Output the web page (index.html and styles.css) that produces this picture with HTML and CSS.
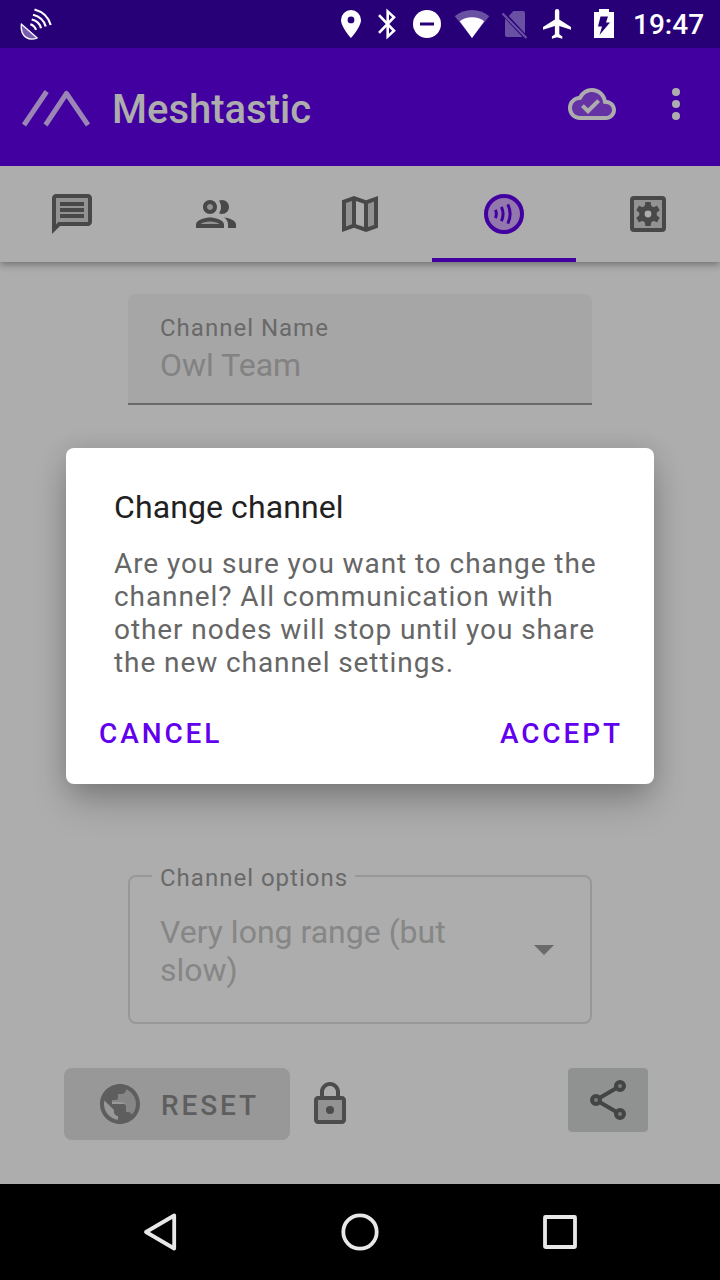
FILE: index.html
```html
<!DOCTYPE html>
<html lang="en">
<head>
<meta charset="utf-8">
<title>Meshtastic</title>
<link rel="stylesheet" href="styles.css">
</head>
<body>
<div class="screen">
  <header class="status">
    <svg class="dish" width="36" height="36" viewBox="18 6 36 36" fill="none" stroke="#fff" stroke-width="2.2">
      <path d="M21.300 24L37.200 38C30 41 20 38 21.300 24Z" fill="#7a5cae" stroke-width="1.300" stroke-linejoin="round"/>
      <path d="M34.500 9.500C42 11.500 48.500 17 50.700 25M33 14.800C39 16.300 44 20.500 45.700 26.500M31.700 19.500C36 20.500 39.800 23.500 41 28.200M30.300 24.300C33 25 35 27 36 29.800"/>
    </svg>
    <div class="status-icons">
      <svg width="20" height="32" viewBox="341 8 20 32" fill="#fff"><path fill-rule="evenodd" d="M351 10a10 10 0 0 0-10 10c0 7.200 10 18 10 18s10-10.800 10-18a10 10 0 0 0-10-10zm0 13.300a3.400 3.400 0 1 1 0-6.800 3.400 3.400 0 0 1 0 6.800z"/></svg>
      <svg class="bt" width="20" height="32" viewBox="377 8 20 32" fill="none" stroke="#fff" stroke-width="2.600"><path d="M379 15.200L394 30.800 387.700 36.600V11.400L394 17.200 379 32.800"/></svg>
      <svg class="dnd" width="28" height="32" viewBox="413 8 28 32"><circle cx="427" cy="24" r="14" fill="#fff"/><path d="M420 24h14" stroke="#270077" stroke-width="3"/></svg>
      <svg class="wifi" width="34" height="32" viewBox="455 8 34 32"><path d="M454.800 16.200C459.500 12 465.500 9.900 472 9.900s12.500 2.100 17.200 6.300L472 38z" fill="#6a50a2"/><path d="M459.800 21.300C463 18.800 467 17.300 472 17.300s9 1.500 12.200 4L472 38z" fill="#fff"/></svg>
      <svg class="sim" width="28" height="32" viewBox="501 8 28 32"><path d="M513.500 11H523a2 2 0 0 1 2 2v20.400L508.800 16zM505 18.500L522.500 37H507a2 2 0 0 1-2-2z" fill="#6a50a2"/><path d="M502.500 13.500L526.500 38" stroke="#6a50a2" stroke-width="2.300"/></svg>
      <svg class="plane" width="28" height="32" viewBox="543 8 28 32" fill="#fff"><path d="M571 29.800v-2.900l-11.700-7.400v-8.200a2.200 2.200 0 0 0-4.400 0v8.200L543 26.900v2.900l11.900-3.700v8.100l-3 2.200v2.300l5.200-1.500 5.200 1.500v-2.300l-3-2.200v-8.100z"/></svg>
      <svg class="battery" width="20" height="32" viewBox="594 8 20 32"><path d="M599 9h10v3h5v26h-20V12h5z" fill="#fff"/><path d="M600.500 16.500h7.500l-2 6h4l-10.500 12.500 2.500-8.500h-4z" fill="#270077"/></svg>
      <span class="clock">19:47</span>
    </div>
  </header>

  <div class="appbar">
    <svg width="72" height="44" viewBox="20 84 72 44" fill="none" stroke="#9a85b4" stroke-width="5"><path d="M24 124L46.700 90.500M45.500 124L66.500 92.500 88 124" stroke-linejoin="round"/></svg>
    <h1 class="app-title">Meshtastic</h1>
    <svg class="cloud" width="48" height="48" viewBox="0 0 24 24" fill="#adadad"><path d="M19.200 12C18.500 8 16 5 12 5S6.500 8 6 9C3 9.500 1 11 1 14s2 5 5 5h13c3 0 4-2 4-4s-1.500-3-3.800-3z" fill="#6532a5"/><path d="M19.350 10.040C18.670 6.590 15.640 4 12 4 9.110 4 6.600 5.640 5.350 8.040 2.340 8.360 0 10.910 0 14c0 3.310 2.690 6 6 6h13c2.760 0 5-2.240 5-5 0-2.640-2.050-4.780-4.650-4.960zM19 18H6c-2.210 0-4-1.790-4-4 0-2.050 1.530-3.760 3.560-3.970l1.070-.11.5-.95C8.080 7.140 9.940 6 12 6c2.620 0 4.880 1.860 5.390 4.430l.3 1.500 1.530.11c1.560.1 2.780 1.410 2.780 2.960 0 1.650-1.350 3-3 3zM10 14.180l-2.090-2.090L6.500 13.500 10 17l6.010-6.010-1.410-1.410z"/></svg>
    <svg class="more" width="8" height="48" viewBox="0 0 8 48" fill="#adadad"><circle cx="4" cy="12" r="4"/><circle cx="4" cy="24" r="4"/><circle cx="4" cy="36" r="4"/></svg>
  </div>

  <nav class="tabs">
    <div class="tab"><svg class="icon" viewBox="0 0 24 24"><path class="tint" d="M3 3h18v14H3z"/><path d="M20 2H4c-1.100 0-2 .9-2 2v18l4-4h14c1.100 0 2-.9 2-2V4c0-1.100-.9-2-2-2zm0 14H5.200L4 17.200V4h16v12zM6 6h12v2H6zM6 9h12v2H6zM6 12h12v2H6z"/></svg></div>
    <div class="tab"><svg class="icon" viewBox="0 0 24 24"><circle class="tint" cx="9" cy="8.500" r="2"/><path class="tint" d="M4 17.500c2-2.500 8-2.500 10 0z"/><path d="M9 13.750c-2.340 0-7 1.170-7 3.500V19h14v-1.750c0-2.330-4.660-3.500-7-3.500zM4.340 17c.84-.58 2.870-1.250 4.660-1.250s3.820.67 4.660 1.250H4.340zM9 12c1.930 0 3.500-1.570 3.500-3.500S10.930 5 9 5 5.500 6.570 5.500 8.500 7.070 12 9 12zm0-5c.83 0 1.500.67 1.500 1.500S9.830 10 9 10s-1.500-.67-1.500-1.500S8.170 7 9 7zm7.040 6.810c1.160.84 1.960 1.960 1.960 3.440V19h4v-1.750c0-2.020-3.500-3.170-5.960-3.440zM15 12c1.930 0 3.500-1.570 3.500-3.500S16.930 5 15 5c-.54 0-1.040.13-1.500.35.630.89 1 1.980 1 3.150s-.37 2.260-1 3.150c.46.22.96.35 1.500.35z"/></svg></div>
    <div class="tab"><svg class="icon" viewBox="0 0 24 24"><path class="tint" d="M4 5.500l5-1.500v14l-5 2zM15 6l5-1.500V18l-5 2z"/><path d="M21 3l-6 2.100L9 3 3 5.100V21l6-2.100 6 2.100 6-2.100zM10 5.470l4 1.400v11.660l-4-1.400V5.470zm-5 .99l3-1.010v11.700l-3 1.160V6.460zm14 11.080l-3 1.010V6.860l3-1.160v11.840z"/></svg></div>
    <div class="tab tab-active"><svg class="icon" viewBox="0 0 24 24"><circle cx="12" cy="12" r="9" fill="#9278ad" stroke="#4200a1" stroke-width="2"/><path d="M7.700 9.900a5 5 0 0 1 0 4.200M10.700 8.400a8.500 8.500 0 0 1 0 7.200M13.900 7.200a11 11 0 0 1 0 9.600" fill="none" stroke="#4200a1" stroke-width="1.500"/></svg></div>
    <div class="tab"><svg class="icon" viewBox="0 0 24 24"><rect x="4" y="4" width="16" height="16" rx="1" fill="#929292" stroke="#484848" stroke-width="2"/><circle cx="12" cy="12" r="4.400"/><path d="M10.700 6h2.600l.5 3v6l-.5 3h-2.600l-.5-3V9z"/><path d="M10.700 6h2.600l.5 3v6l-.5 3h-2.600l-.5-3V9z" transform="rotate(60 12 12)"/><path d="M10.700 6h2.600l.5 3v6l-.5 3h-2.600l-.5-3V9z" transform="rotate(120 12 12)"/><circle cx="12" cy="12" r="1.700" fill="#adadad"/></svg></div>
  </nav>

  <main class="content">
    <div class="name-field">
      <div class="label">Channel Name</div>
      <div class="value">Owl Team</div>
    </div>
    <div class="options">
      <div class="label options-label">Channel options</div>
      <div class="value options-value">Very long range (but slow)</div>
      <svg width="20" height="10" viewBox="0 0 20 10"><path d="M0 0h20L10 10z" fill="#696969"/></svg>
    </div>
    <div class="actions">
      <div class="reset">
        <svg width="48" height="48" viewBox="0 0 24 24" fill="#5e5e5e"><path d="M15 4l5 4v9l-2 1-3-2v-4l-2-1H8v-2l3-1V7h3z" fill="#868686"/><path d="M12 2C6.480 2 2 6.480 2 12s4.480 10 10 10 10-4.480 10-10S17.520 2 12 2zm-1 17.930c-3.950-.49-7-3.850-7-7.930 0-.62.08-1.210.21-1.790L9 15v1c0 1.100.9 2 2 2v1.930zm6.900-2.540c-.26-.81-1-1.390-1.900-1.390h-1v-3c0-.55-.45-1-1-1H8v-2h2c.55 0 1-.45 1-1V7h2c1.100 0 2-.9 2-2v-.41c2.930 1.190 5 4.060 5 7.410 0 2.080-.8 3.970-2.100 5.390z"/></svg>
        <span>RESET</span>
      </div>
      <svg class="lock" width="48" height="48" viewBox="0 0 24 24" fill="#4c4c4c"><path d="M5 9h14v12H5z" fill="#929292"/><path d="M18 8h-1V6c0-2.760-2.240-5-5-5S7 3.240 7 6v2H6c-1.100 0-2 .9-2 2v10c0 1.100.9 2 2 2h12c1.100 0 2-.9 2-2V10c0-1.100-.9-2-2-2zM9 6c0-1.660 1.340-3 3-3s3 1.340 3 3v2H9V6zm9 14H6V10h12v10z"/><circle cx="12" cy="15" r="2"/></svg>
      <div class="share">
        <svg width="48" height="48" viewBox="584 1076 48 48" fill="#787a79" stroke="#434544" stroke-width="4"><path d="M620 1086L596 1100 620 1114" fill="none"/><circle cx="620" cy="1086" r="4"/><circle cx="596" cy="1100" r="4"/><circle cx="620" cy="1114" r="4"/></svg>
      </div>
    </div>
  </main>

  <footer class="navbar">
    <svg width="36" height="40" viewBox="142 1212 36 40"><path d="M174.200 1215.500v33L146 1232z"/></svg>
    <svg width="40" height="40" viewBox="340 1212 40 40"><circle cx="360" cy="1232" r="16.700"/></svg>
    <svg width="36" height="40" viewBox="542 1212 36 40"><rect x="545" y="1217" width="30" height="30" rx=".5"/></svg>
  </footer>

  <section class="dialog">
    <h2 class="dialog-title">Change channel</h2>
    <p class="dialog-text">Are you sure you want to change the<br>channel? All communication with<br>other nodes will stop until you share<br>the new channel settings.</p>
    <div class="dialog-buttons"><span>CANCEL</span><span>ACCEPT</span></div>
  </section>
</div>
</body>
</html>
```

FILE: styles.css
```css
* { box-sizing: border-box; }
body { margin: 0; font-family: Roboto, "Liberation Sans", sans-serif; }
svg { display: block; flex: none; }
h1, h2, p { margin: 0; }

.screen {
  position: relative;
  width: 720px;
  height: 1280px;
  display: flex;
  flex-direction: column;
  background: #adadad;
  overflow: hidden;
}

.status {
  height: 48px;
  padding: 0 16px 0 18px;
  display: flex;
  align-items: center;
  justify-content: space-between;
  background: #270077;
}
.status-icons { display: flex; align-items: center; }
.bt { margin-left: 16px; }
.dnd { margin-left: 16px; }
.wifi { margin-left: 14px; }
.sim { margin-left: 12px; }
.plane { margin-left: 14px; }
.battery { margin-left: 23px; }
.clock {
  width: 71px;
  margin-left: 19px;
  padding-top: 2px;
  color: #fff;
  font-size: 28px;
  font-weight: 500;
  line-height: 32px;
  white-space: nowrap;
}

.appbar {
  height: 118px;
  padding: 0 40px 0 20px;
  display: flex;
  align-items: center;
  background: #4200a1;
}
.app-title {
  margin-left: 20px;
  padding-top: 5px;
  flex: 1;
  color: #adadad;
  font-size: 40px;
  font-weight: 500;
  line-height: 48px;
}
.cloud { margin-bottom: 6px; }
.more { margin: 0 0 6px 56px; }

.tabs {
  height: 96px;
  display: flex;
  background: #adadad;
  box-shadow: 0 2px 8px rgba(0, 0, 0, .4);
  clip-path: inset(0 0 -20px 0);
}
.tab {
  flex: 1;
  display: flex;
  align-items: center;
  justify-content: center;
}
.tab-active { box-shadow: inset 0 -4px #4200a1; }
.icon { width: 48px; height: 48px; fill: #484848; }
.tint { fill: #929292; }

.content { flex: 1; padding: 32px 72px 0 64px; }
.label {
  color: #696969;
  font-size: 24px;
  line-height: 28px;
  letter-spacing: 1px;
  white-space: nowrap;
}
.value { color: #868686; font-size: 32px; line-height: 38px; }
.name-field {
  width: 464px;
  height: 111px;
  margin-left: 64px;
  padding: 20px 32px 0;
  background: #a6a6a6;
  border-bottom: 2px solid #696969;
  border-radius: 8px 8px 0 0;
}
.name-field .value { margin-top: 4px; color: #828282; }
.options {
  position: relative;
  width: 464px;
  height: 149px;
  margin: 470px 0 0 64px;
  padding: 0 36px 0 30px;
  display: flex;
  align-items: center;
  justify-content: space-between;
  border: 2px solid #989898;
  border-radius: 8px;
}
.options-label {
  position: absolute;
  left: 22px;
  top: -13px;
  padding: 0 7px 0 8px;
  background: #adadad;
}
.options-value { width: 310px; padding-top: 3px; }
.actions { margin-top: 44px; display: flex; align-items: flex-start; }
.reset {
  width: 226px;
  height: 72px;
  padding-left: 32px;
  display: flex;
  align-items: center;
  gap: 17px;
  border-radius: 8px;
  background: #989898;
  color: #5e5e5e;
  font-size: 28px;
  font-weight: 500;
  letter-spacing: 2.9px;
}
.reset span { padding-top: 2px; }
.lock { margin: 12px 0 0 16px; }
.share {
  width: 80px;
  height: 64px;
  margin-left: auto;
  display: flex;
  align-items: center;
  justify-content: center;
  border-radius: 4px;
  background: #909291;
}

.navbar {
  height: 96px;
  padding: 0 142px;
  display: flex;
  align-items: center;
  justify-content: space-between;
  background: #000;
  fill: none;
  stroke: #e8e8e8;
  stroke-width: 3.8;
  stroke-linejoin: round;
}

.dialog {
  position: absolute;
  left: 66px;
  top: 448px;
  width: 588px;
  height: 336px;
  padding: 40px 31px 0 33px;
  border-radius: 8px;
  background: #fff;
  box-shadow: 0 20px 36px -4px rgba(0, 0, 0, .25), 0 2px 24px rgba(0, 0, 0, .12);
}
.dialog-title {
  padding-left: 15px;
  color: #212121;
  font-size: 32px;
  font-weight: 400;
  line-height: 38px;
  letter-spacing: .1px;
}
.dialog-text {
  margin-top: 21px;
  padding-left: 15px;
  color: #666;
  font-size: 28px;
  line-height: 33px;
  letter-spacing: .92px;
  white-space: nowrap;
}
.dialog-buttons {
  margin-top: 38px;
  display: flex;
  justify-content: space-between;
  color: #6200ee;
  font-size: 28px;
  font-weight: 500;
  line-height: 33px;
  letter-spacing: 2.9px;
}
```
